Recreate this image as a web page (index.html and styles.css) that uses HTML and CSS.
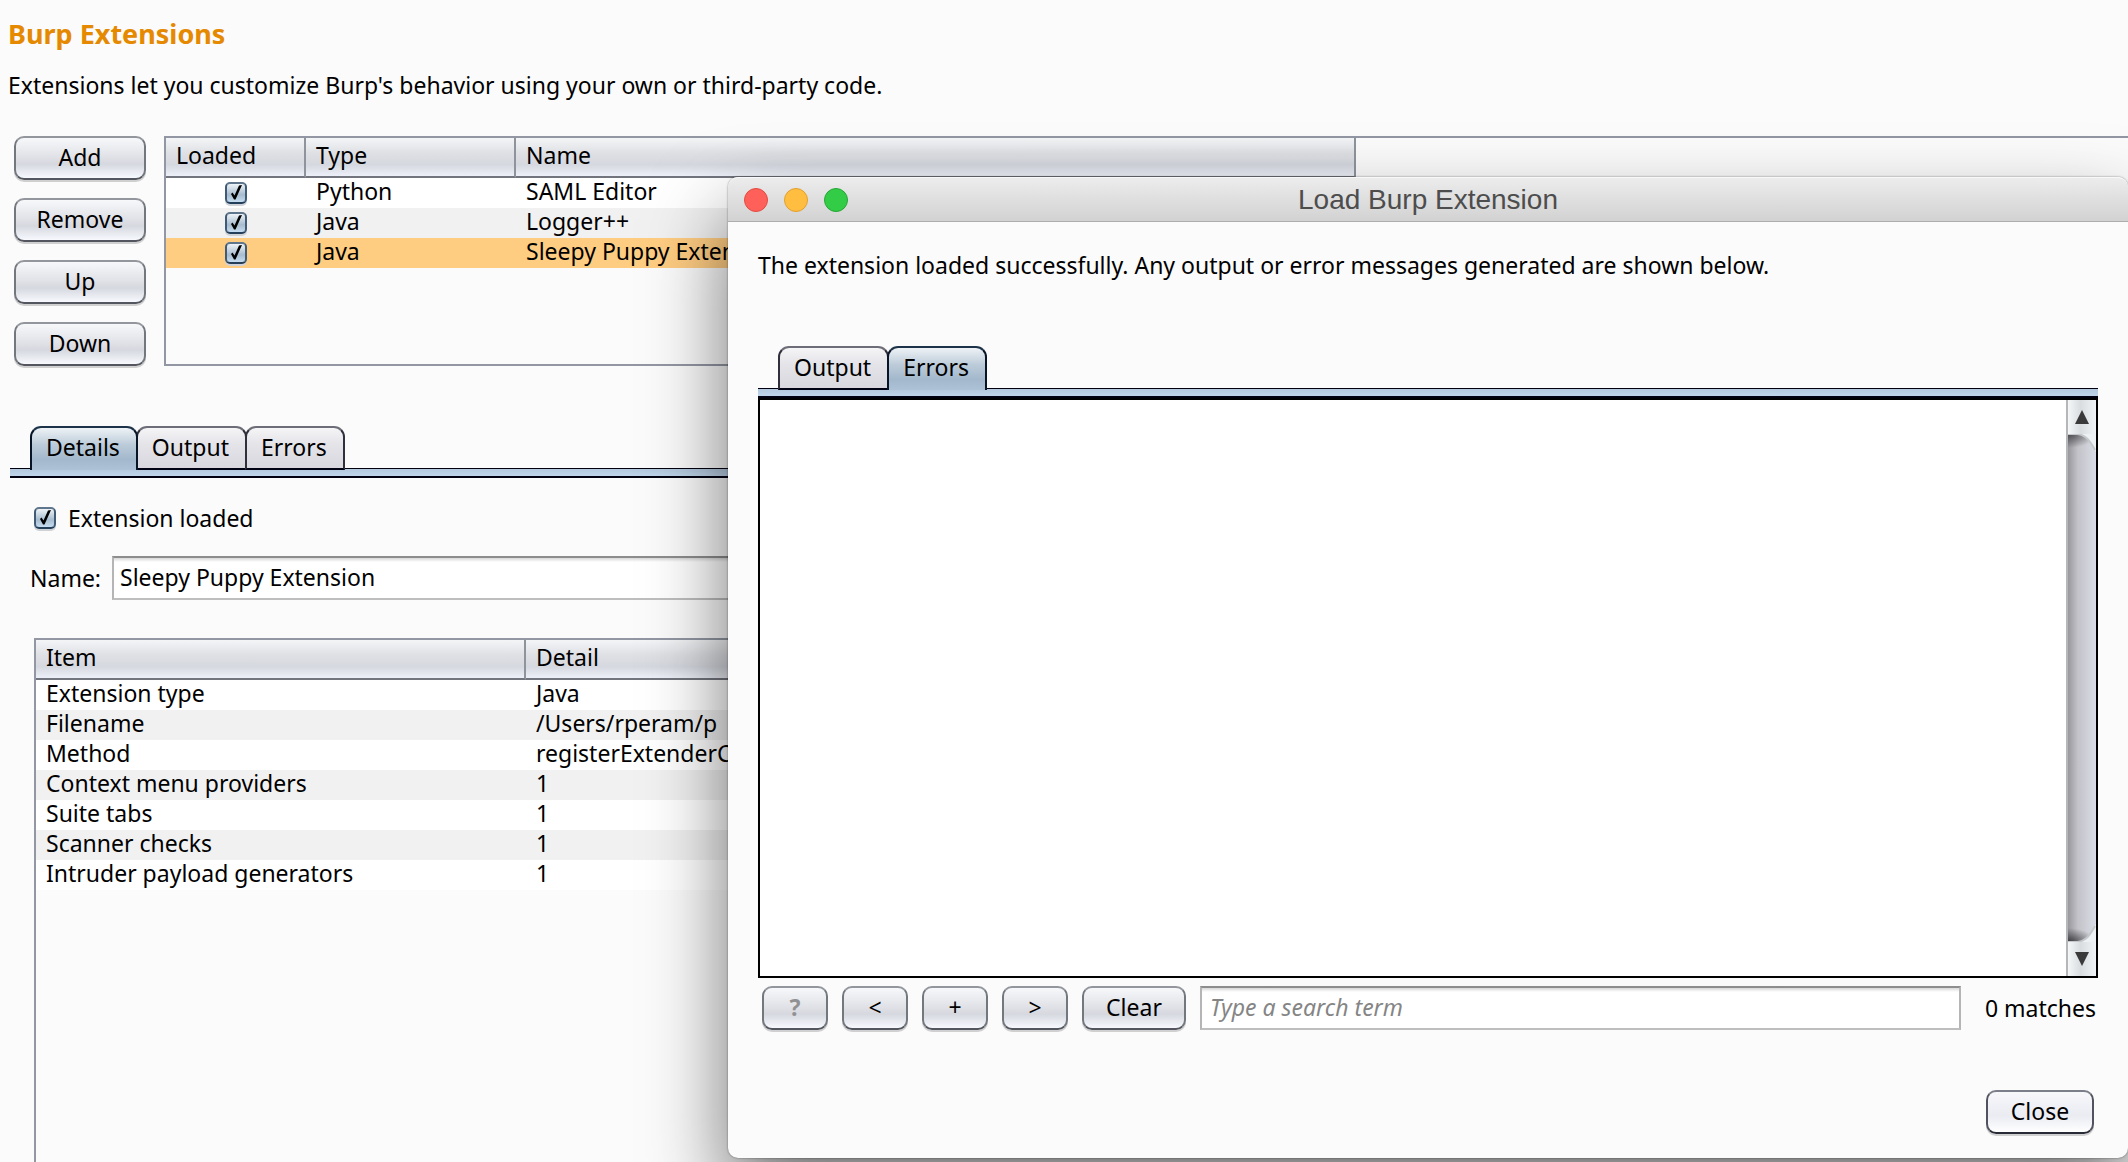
FILE: index.html
```html
<!DOCTYPE html>
<html lang="en">
<head>
<meta charset="utf-8">
<title>Burp Extensions</title>
<link rel="stylesheet" href="styles.css">
</head>
<body>
<svg class="defs" aria-hidden="true">
  <symbol id="tick" viewBox="0 0 22 22"><path d="M6 12 L7.500 10.500 L9.500 13.500 L14 3.500 L17 3 L10.500 17.500 L9 17.500z"/></symbol>
</svg>
<main class="page">
  <h1 class="page-title">Burp Extensions</h1>
  <p class="intro">Extensions let you customize Burp's behavior using your own or third-party code.</p>

  <section class="extensions">
    <div class="actions">
      <button class="button" type="button">Add</button>
      <button class="button" type="button">Remove</button>
      <button class="button" type="button">Up</button>
      <button class="button" type="button">Down</button>
    </div>
    <div class="table-frame">
      <table class="grid grid-extensions">
        <colgroup><col class="col-loaded"><col class="col-type"><col></colgroup>
        <thead><tr><th scope="col">Loaded</th><th scope="col">Type</th><th scope="col">Name</th></tr></thead>
        <tbody>
          <tr><td><span class="check"><input type="checkbox" checked aria-label="SAML Editor loaded"><svg><use href="#tick"/></svg></span></td><td>Python</td><td>SAML Editor</td></tr>
          <tr><td><span class="check"><input type="checkbox" checked aria-label="Logger++ loaded"><svg><use href="#tick"/></svg></span></td><td>Java</td><td>Logger++</td></tr>
          <tr class="selected"><td><span class="check"><input type="checkbox" checked aria-label="Sleepy Puppy Extension loaded"><svg><use href="#tick"/></svg></span></td><td>Java</td><td>Sleepy Puppy Extension</td></tr>
        </tbody>
      </table>
    </div>
  </section>

  <section class="details">
    <div class="tabs" role="tablist">
      <button class="tab active" type="button" role="tab" aria-selected="true">Details</button>
      <button class="tab" type="button" role="tab" aria-selected="false">Output</button>
      <button class="tab" type="button" role="tab" aria-selected="false">Errors</button>
    </div>
    <div class="tab-strip"></div>
    <div class="details-body">
      <label class="loaded"><span class="check"><input type="checkbox" checked><svg><use href="#tick"/></svg></span>Extension loaded</label>
      <div class="name-row">
        <label for="ext-name">Name:</label>
        <input class="field" id="ext-name" type="text" value="Sleepy Puppy Extension">
      </div>
      <div class="table-frame details-frame">
        <table class="grid">
          <colgroup><col class="col-item"><col></colgroup>
          <thead><tr><th scope="col">Item</th><th scope="col">Detail</th></tr></thead>
          <tbody>
            <tr><td>Extension type</td><td>Java</td></tr>
            <tr><td>Filename</td><td>/Users/rperam/p</td></tr>
            <tr><td>Method</td><td>registerExtenderC</td></tr>
            <tr><td>Context menu providers</td><td>1</td></tr>
            <tr><td>Suite tabs</td><td>1</td></tr>
            <tr><td>Scanner checks</td><td>1</td></tr>
            <tr><td>Intruder payload generators</td><td>1</td></tr>
          </tbody>
        </table>
      </div>
    </div>
  </section>

  <div class="dialog" role="dialog" aria-labelledby="dialog-title">
    <header class="titlebar">
      <div class="lights">
        <button class="light red" type="button" aria-label="Close window"></button>
        <button class="light amber" type="button" aria-label="Minimize window"></button>
        <button class="light green" type="button" aria-label="Zoom window"></button>
      </div>
      <h2 class="dialog-title" id="dialog-title">Load Burp Extension</h2>
    </header>
    <div class="dialog-body">
      <p class="message">The extension loaded successfully. Any output or error messages generated are shown below.</p>
      <div class="tabs" role="tablist">
        <button class="tab" type="button" role="tab" aria-selected="false">Output</button>
        <button class="tab active" type="button" role="tab" aria-selected="true">Errors</button>
      </div>
      <div class="tab-strip"></div>
      <div class="log">
        <textarea class="log-text" aria-label="Errors" readonly></textarea>
        <div class="scrollbar" aria-hidden="true">
          <svg class="arrow" viewBox="0 0 14 14"><path d="M7 0 L14 14 H0z"/></svg>
          <div class="track">
            <svg class="cap" viewBox="0 0 30 18" preserveAspectRatio="none"><path d="M0 0 H10 C20 1 24 8 30 18 V0z"/><path class="rim" d="M0 0 H10 C20 1 24 8 29 16"/></svg>
            <svg class="cap bottom" viewBox="0 0 30 18" preserveAspectRatio="none"><path d="M0 0 H10 C20 1 24 8 30 18 V0z"/><path class="rim" d="M0 0 H10 C20 1 24 8 29 16"/></svg>
          </div>
          <svg class="arrow" viewBox="0 0 14 14"><path d="M7 14 L14 0 H0z"/></svg>
        </div>
      </div>
      <div class="search-row">
        <button class="button square help" type="button">?</button>
        <button class="button square" type="button">&lt;</button>
        <button class="button square" type="button">+</button>
        <button class="button square" type="button">&gt;</button>
        <button class="button clear" type="button">Clear</button>
        <input class="field search" type="search" placeholder="Type a search term" aria-label="Search">
        <span class="matches">0 matches</span>
      </div>
      <div class="dialog-footer"><button class="button close" type="button">Close</button></div>
    </div>
  </div>
</main>
</body>
</html>
```
FILE: styles.css
```css
* { box-sizing: border-box; }

body {
  margin: 0;
  background: #fbfbfb;
  color: #000;
  font: 23px/30px "Noto Sans", sans-serif;
}

button, input, textarea { font: inherit; color: inherit; margin: 0; }
h1, h2, p { margin: 0; }
.defs { display: none; }

.page {
  position: relative;
  display: flex;
  flex-direction: column;
  min-height: 100vh;
  padding-top: 17px;
  overflow: hidden;
}

.page-title {
  padding-left: 8px;
  color: #e58900;
  font-size: 27px;
  line-height: 34px;
}
.intro { padding: 19px 0 0 8px; }

.extensions { display: flex; gap: 18px; padding: 36px 0 0 14px; }
.actions { display: flex; flex-direction: column; gap: 18px; width: 132px; }

.button {
  height: 44px;
  padding: 0 0 2px;
  border: 2px solid;
  border-color: #93979d #73777e #53565e;
  border-radius: 10px;
  background: linear-gradient(#f7f8fa, #e2e3e8 45%, #d6d8df 65%, #f7f9ff);
  box-shadow: 0 2px 0 #d0d0d0;
}

.table-frame {
  flex: 1;
  border: solid #9297a3;
  border-width: 2px 0 2px 2px;
}
.grid { width: 100%; table-layout: fixed; border-spacing: 0; }
.grid-extensions { width: 1190px; }
.col-loaded { width: 140px; }
.col-type { width: 210px; }
.col-item { width: 490px; }
.grid th {
  height: 40px;
  padding: 0 10px 4px;
  border-right: 2px solid #8f939b;
  border-bottom: 2px solid #72757d;
  background: linear-gradient(#f4f5f7, #dfe0e4 40%, #d5d8df 70%, #edf0f8);
  font-weight: 400;
  text-align: left;
}
.grid td {
  height: 30px;
  padding: 0 10px;
  background: #fff;
  line-height: 27px;
  vertical-align: top;
  white-space: nowrap;
}
.grid tbody tr:nth-child(even) td { background: #f1f1f1; }
.grid tbody tr.selected td { background: #ffcd82; }
.grid .check { margin: 4px auto 0; }

.check { display: grid; width: 22px; height: 22px; }
.check > * { grid-area: 1 / 1; width: 22px; height: 22px; }
.check svg { pointer-events: none; }
.check input {
  appearance: none;
  border: 2px solid;
  border-color: #60768c #3f5b75 #233f5a;
  border-radius: 5px;
  background: linear-gradient(#eef3f7, #a7bccf 60%, #c6dcf0);
  box-shadow: 0 2px 0 #cfd3d8;
}

.details { display: flex; flex: 1; flex-direction: column; padding: 60px 0 0 10px; }
.tabs { position: relative; z-index: 1; display: flex; margin-bottom: -2px; padding-left: 20px; }
.tab {
  height: 44px;
  margin-right: -2px;
  padding: 0 16px 2px 14px;
  border: 2px solid;
  border-color: #6c6d76 #30303c #030316;
  border-radius: 11px 11px 0 0;
  background: linear-gradient(#f5f5f7, #e4e4e9 40%, #d8d8de);
}
.tab.active {
  z-index: 1;
  padding-bottom: 4px;
  border-color: #1c3349 #071527;
  border-bottom: 0;
  background: linear-gradient(#eef3f6, #bccbd9 40%, #a3b8cc 75%, #adc2d6);
}
.tab-strip {
  height: 10px;
  border-top: 1px solid #000010;
  border-bottom: 2px solid #000010;
  background: linear-gradient(#b3c8dc, #bfd5eb);
}

.details-body { display: flex; flex: 1; flex-direction: column; padding: 25px 0 0 20px; }
.loaded { display: flex; align-items: center; gap: 12px; padding-left: 4px; }
.name-row { display: flex; align-items: center; gap: 11px; margin-top: 23px; }
.field {
  flex: 1;
  min-width: 0;
  height: 44px;
  padding: 0 6px 2px;
  border: 2px solid;
  border-color: #8d8d8d #b5b5b5 #bebebe;
  border-radius: 0;
  outline: 0;
  background: linear-gradient(#d8d8d8, #fff 4px);
}
.details-frame { margin: 38px 0 0 4px; border-bottom: 0; }

.dialog {
  position: absolute;
  inset: 177px 0 4px 728px;
  display: flex;
  flex-direction: column;
  border-radius: 10px;
  background: #fbfbfb;
  box-shadow: 0 0 2px rgba(0, 0, 0, .5), 0 40px 80px rgba(0, 0, 0, .55);
}
.titlebar {
  display: grid;
  grid-template-columns: 1fr auto 1fr;
  align-items: center;
  height: 45px;
  border-top: 1px solid #f8f8f8;
  border-bottom: 1px solid #adadad;
  border-radius: 10px 10px 0 0;
  background: linear-gradient(#ececec, #d2d2d2);
}
.lights { display: flex; gap: 16px; padding-left: 16px; }
.light { width: 24px; height: 24px; padding: 0; border: 1px solid; border-radius: 50%; }
.red { border-color: #e24b41; background: #ff6059; }
.amber { border-color: #e1a030; background: #ffbe40; }
.green { border-color: #25a636; background: #33cc47; }
.dialog-title { color: #4d4d4d; font: 28px/30px "Liberation Sans", Arial, sans-serif; }

.dialog-body { display: flex; flex: 1; flex-direction: column; padding: 28px 30px 24px; }
.message { padding-bottom: 66px; }
.log { display: flex; flex: 1; border: 2px solid #000; }
.log-text { flex: 1; padding: 4px; border: 0; outline: 0; background: #fff; resize: none; }
.scrollbar {
  display: flex;
  flex-direction: column;
  align-items: center;
  gap: 10px;
  width: 30px;
  padding: 10px 0;
  border-left: 2px solid #b4b8bb;
  background: linear-gradient(90deg, #f5f7f8, #d9dde0 45%, #f1f4f6);
}
.arrow { width: 14px; height: 14px; fill: #3a3a3a; }
.track {
  display: flex;
  flex: 1;
  flex-direction: column;
  justify-content: space-between;
  align-self: stretch;
  background:
    radial-gradient(ellipse 28px 14px at 0 0, #4c4c50, transparent),
    radial-gradient(ellipse 28px 14px at 0 100%, #3c3c40, transparent),
    linear-gradient(90deg, #98989d, #c2c2c8 35%, #d3d5dd 80%, #d9dce6);
}
.cap { width: 100%; height: 18px; fill: #eef1f3; }
.cap .rim { fill: none; stroke: #c5c8cb; stroke-width: 2; }
.bottom { transform: scaleY(-1); }

.search-row { display: flex; align-items: center; gap: 14px; padding: 8px 2px 0 4px; }
.square { width: 66px; }
.help { color: #919191; font-weight: 700; }
.clear { width: 104px; }
.search { padding-left: 8px; }
.search::placeholder { color: #858585; font-style: italic; opacity: 1; }
.matches { padding-left: 10px; }
.dialog-footer { display: flex; justify-content: flex-end; padding: 60px 4px 0 0; }
.close {
  width: 108px;
  border-color: #7c7f89 #50535e #292c37;
  background: linear-gradient(#f8f8fb, #eaecf2 60%, #fff);
}
```
